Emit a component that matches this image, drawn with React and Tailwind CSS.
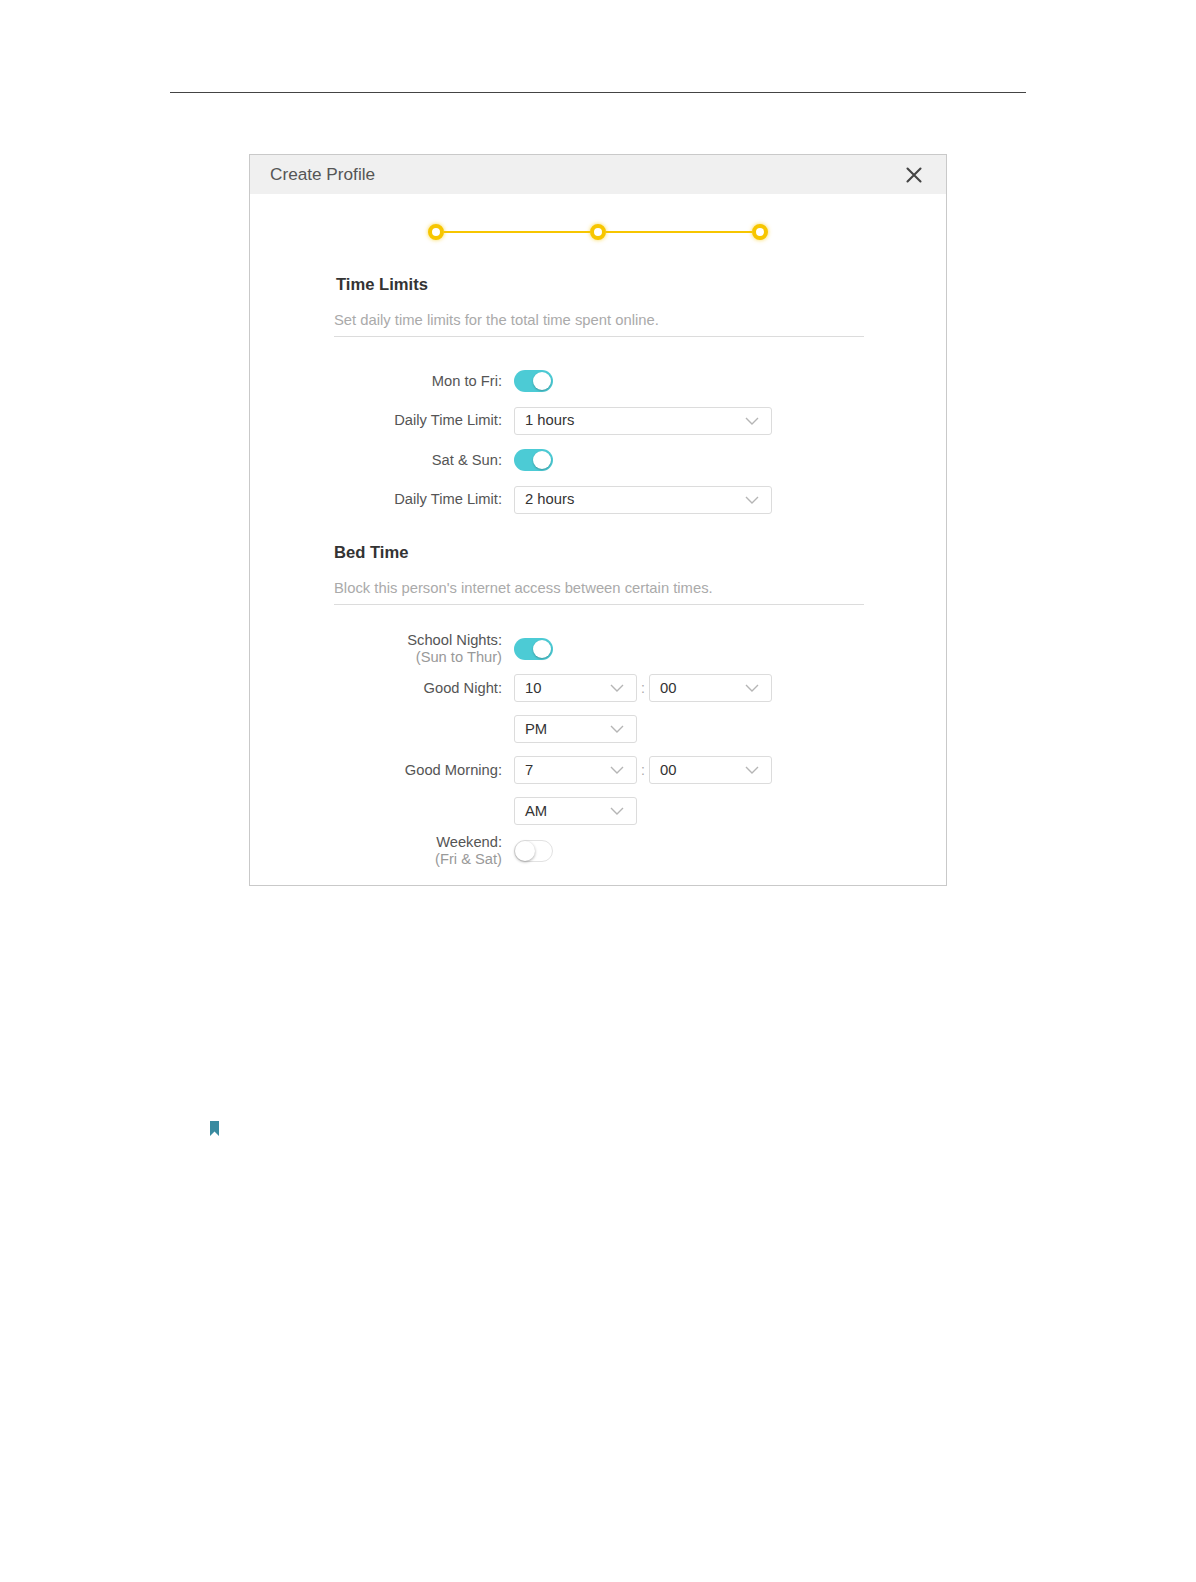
function Toggle({ on }) {
  if (on) {
    return (
      <div className="relative h-[22px] w-[39px] rounded-full bg-[#4ccbd5]">
        <div className="absolute right-[2px] top-[2px] h-[18px] w-[18px] rounded-full bg-white shadow-[0_1px_2px_rgba(0,0,0,0.25)]" />
      </div>
    );
  }
  return (
    <div className="relative h-[22px] w-[39px] rounded-full border border-[#e2e2e2] bg-white">
      <div className="absolute left-0 top-0 h-[20px] w-[20px] rounded-full bg-white shadow-[0_1px_3px_rgba(0,0,0,0.35)]" />
    </div>
  );
}

function Chevron() {
  return (
    <svg width="14" height="8" viewBox="0 0 14 8" fill="none">
      <path d="M1 1l6 6 6-6" stroke="#b5b5b5" strokeWidth="1.4" />
    </svg>
  );
}

function Select({ value, wide }) {
  return (
    <div
      className={
        "flex h-[28px] items-center justify-between rounded-[3px] border border-[#dcdcdc] bg-white pl-[10px] pr-[12px] text-[14.8px] text-[#333] " +
        (wide ? "w-[258px]" : "w-[123px]")
      }
    >
      <span>{value}</span>
      <Chevron />
    </div>
  );
}

function Row({ label, sub, children, h = "h-[28px]" }) {
  return (
    <div className={"grid grid-cols-[168px_1fr] items-center gap-x-3 " + h}>
      <div className="text-right text-[14.7px] leading-[17px] text-[#555]">
        <div>{label}</div>
        {sub && <div className="text-[#999]">{sub}</div>}
      </div>
      <div className="flex items-center">{children}</div>
    </div>
  );
}

function TimeRow({ label, hour, min }) {
  return (
    <Row label={label}>
      <Select value={hour} />
      <span className="w-[12px] text-center text-[14px] text-[#aaa]">:</span>
      <Select value={min} />
    </Row>
  );
}

function Step() {
  return (
    <div className="h-[16px] w-[16px] rounded-full border-[4px] border-[#f7c600] bg-white shadow-[0_0_4px_rgba(247,198,0,0.7)]" />
  );
}

export default function App() {
  return (
    <div className="bg-white font-['Liberation_Sans',Arial,sans-serif]">
      <div className="pt-[92px]">
        <div className="ml-[170px] w-[856px] border-t border-[#444]" />
      </div>

      <div className="ml-[249px] mt-[61px] w-[698px] border border-[#c9c9c9] bg-white">
        <div className="flex h-[39px] items-center justify-between bg-[#f0f0f0] pl-[20px] pr-[24px]">
          <span className="text-[17.2px] text-[#555]">Create Profile</span>
          <svg width="16" height="16" viewBox="0 0 16 16">
            <path d="M1.5 1.5l13 13M14.5 1.5l-13 13" stroke="#444" strokeWidth="2.1" strokeLinecap="round" />
          </svg>
        </div>

        {/* stepper */}
        <div className="flex items-center justify-center pt-[30px]">
          <Step />
          <div className="h-[2px] w-[146px] bg-[#f7c600]" />
          <Step />
          <div className="h-[2px] w-[146px] bg-[#f7c600]" />
          <Step />
        </div>

        <div className="ml-[84px] w-[530px] pb-[17px]">
          <div className="mt-[35px] pl-[2px] text-[16.6px] font-bold leading-[20px] text-[#333]">Time Limits</div>
          <div className="mt-[15px] border-b border-[#dcdcdc] pb-[6px] text-[14.8px] leading-[20px] text-[#aaa]">
            Set daily time limits for the total time spent online.
          </div>

          <div className="mt-[30px] flex flex-col gap-[11.5px]">
            <Row label="Mon to Fri:">
              <Toggle on />
            </Row>
            <Row label="Daily Time Limit:">
              <Select value="1 hours" wide />
            </Row>
            <Row label="Sat & Sun:">
              <Toggle on />
            </Row>
            <Row label="Daily Time Limit:">
              <Select value="2 hours" wide />
            </Row>
          </div>

          <div className="mt-[29.5px] text-[16.6px] font-bold leading-[20px] text-[#333]">Bed Time</div>
          <div className="mt-[15px] border-b border-[#dcdcdc] pb-[6px] text-[14.8px] leading-[20px] text-[#aaa]">
            Block this person's internet access between certain times.
          </div>

          <div className="mt-[27px] flex flex-col">
            <Row label="School Nights:" sub="(Sun to Thur)" h="h-[34px]">
              <Toggle on />
            </Row>
            <div className="mt-[8px] flex flex-col gap-[13px]">
              <TimeRow label="Good Night:" hour="10" min="00" />
              <Row label="">
                <Select value="PM" />
              </Row>
              <TimeRow label="Good Morning:" hour="7" min="00" />
              <Row label="">
                <Select value="AM" />
              </Row>
            </div>
            <div className="mt-[8.5px]">
              <Row label="Weekend:" sub="(Fri & Sat)" h="h-[34px]">
                <Toggle />
              </Row>
            </div>
          </div>
        </div>
      </div>

      <div className="ml-[210px] mt-[235px] pb-[40px]">
        <svg width="9" height="15" viewBox="0 0 9 15" className="block">
          <path d="M0 0h9v15L4.5 10.5 0 15z" fill="#3a8ba0" />
        </svg>
      </div>
    </div>
  );
}
